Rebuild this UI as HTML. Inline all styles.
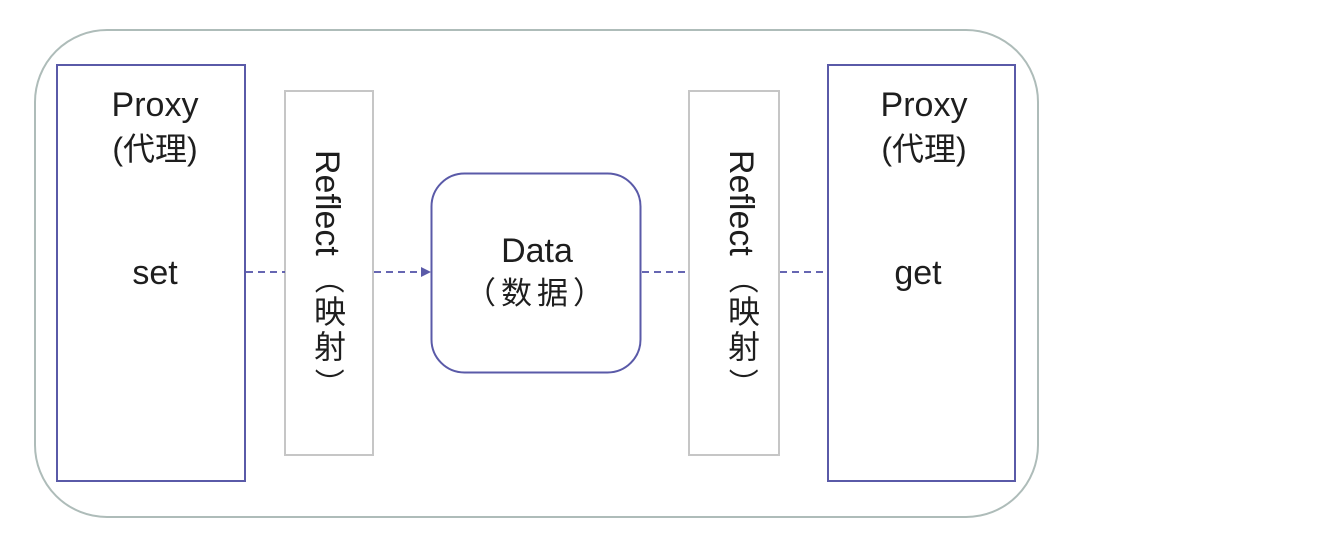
<!DOCTYPE html>
<html><head><meta charset="utf-8"><style>
body{margin:0;background:#fff;width:1334px;height:530px;overflow:hidden}
svg text{font-family:"Liberation Sans","Noto Sans CJK SC",sans-serif;fill:#1e1e1e}
</style></head><body>
<svg width="1334" height="530" viewBox="0 0 1334 530">
<rect x="35" y="30" width="1003" height="487" rx="72" fill="#fff" stroke="#aebcb9" stroke-width="2"/>
<g stroke="#5a5aa8" stroke-width="2" fill="#fff">
<rect x="57" y="65" width="188" height="416"/>
<rect x="828" y="65" width="187" height="416"/>
<rect x="431.5" y="173.5" width="209" height="199" rx="33"/>
</g>
<g stroke="#c6c6c6" stroke-width="2" fill="#fff">
<rect x="285" y="91" width="88" height="364"/>
<rect x="689" y="91" width="90" height="364"/>
</g>
<g stroke="#5050a8" stroke-width="1.8" stroke-dasharray="7,5">
<line x1="246" y1="272" x2="285" y2="272"/>
<line x1="374" y1="272" x2="421" y2="272"/>
<line x1="642" y1="272" x2="689" y2="272"/>
<line x1="780" y1="272" x2="828" y2="272"/>
</g>
<polygon points="421,267 431,272 421,277" fill="#5a5aa8"/>
<g font-size="34" text-anchor="middle">
<text x="155" y="116">Proxy</text>
<text x="155" y="160" font-size="32" fill="#333">(代理)</text>
<text x="155" y="284">set</text>
<text x="924" y="116">Proxy</text>
<text x="924" y="160" font-size="32" fill="#333">(代理)</text>
<text x="918" y="284">get</text>
<text x="537" y="262">Data</text>
<text x="537" y="304" font-size="31" letter-spacing="5" fill="#333">（数据）</text>
</g>
<g font-size="34">
<text transform="translate(316,150) rotate(90)">Reflect</text>
<text transform="translate(730,150) rotate(90)">Reflect</text>
<text transform="translate(318,264) rotate(90)" font-size="30" fill="#333">（</text>
<text transform="translate(732,264) rotate(90)" font-size="30" fill="#333">（</text>
<text x="330" y="323" font-size="32" text-anchor="middle" fill="#333">映</text>
<text x="330" y="358" font-size="32" text-anchor="middle" fill="#333">射</text>
<text x="744" y="323" font-size="32" text-anchor="middle" fill="#333">映</text>
<text x="744" y="358" font-size="32" text-anchor="middle" fill="#333">射</text>
<text transform="translate(318,368) rotate(90)" font-size="30" fill="#333">）</text>
<text transform="translate(732,368) rotate(90)" font-size="30" fill="#333">）</text>
</g>
</svg>
</body></html>
